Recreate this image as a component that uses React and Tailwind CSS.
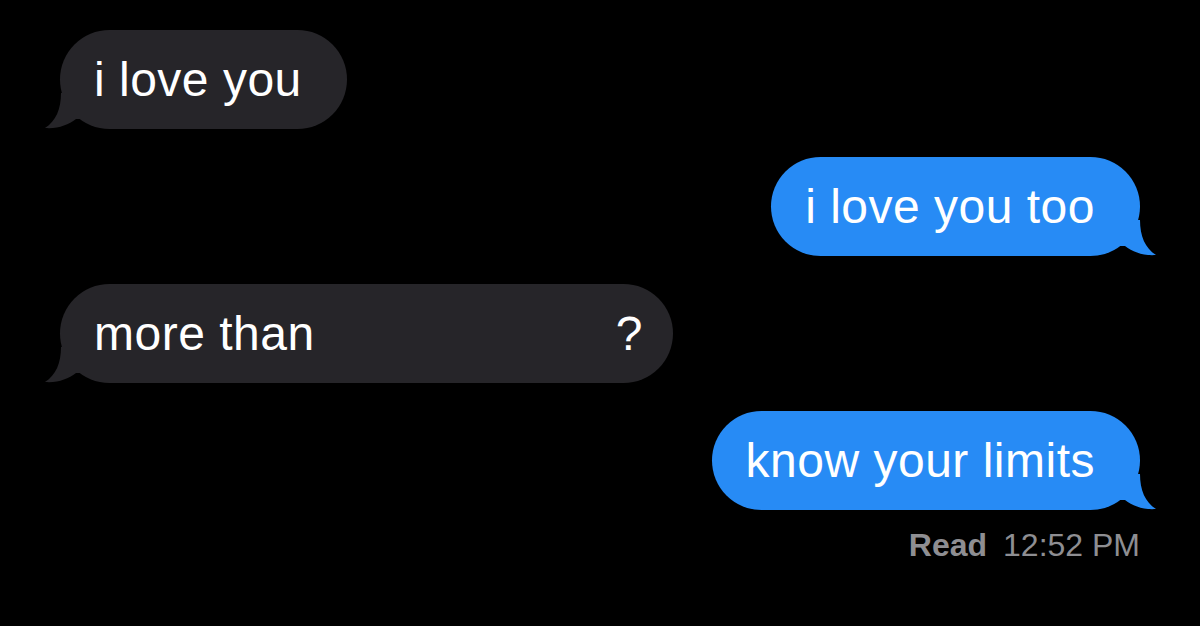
function Tail({ side, color }) {
  // the little curled tail at the bottom corner of a bubble
  if (side === 'left') {
    return (
      <svg
        className="absolute left-[-16px] bottom-0"
        width="40"
        height="36"
        viewBox="0 0 40 36"
      >
        <path d="M17 0 C17 16 12 28 1 35 C14 36 24 32 32 26 L40 26 L40 0 Z" fill={color} />
      </svg>
    );
  }
  return (
    <svg
      className="absolute right-[-17px] bottom-0"
      width="40"
      height="36"
      viewBox="0 0 40 36"
    >
      <path d="M23 0 C23 16 28 28 39 35 C26 36 16 32 8 26 L0 26 L0 0 Z" fill={color} />
    </svg>
  );
}

function Bubble({ from, children, className = '' }) {
  const mine = from === 'me';
  const color = mine ? '#278bf5' : '#262529';
  return (
    <div
      className={`relative flex items-center h-[99px] rounded-[50px] pl-[34px] text-white text-[48px] leading-[58px] tracking-[0.5px] ${
        mine ? 'self-end bg-[#278bf5]' : 'self-start bg-[#262529]'
      } ${className || 'pr-[45px]'}`}
    >
      <Tail side={mine ? 'right' : 'left'} color={color} />
      {children}
    </div>
  );
}

export default function App() {
  return (
    <div
      className="w-full h-[626px] bg-black flex flex-col gap-[28px] px-[60px] pt-[30px] overflow-hidden"
      style={{ fontFamily: '"Liberation Sans", Arial, sans-serif' }}
    >
      <Bubble from="them">i love you</Bubble>
      <Bubble from="me">i love you too</Bubble>
      <Bubble from="them" className="w-[613px] justify-between pr-[30px]">
        <span>more than</span>
        <span>?</span>
      </Bubble>
      <div className="self-end flex flex-col items-end">
        <Bubble from="me">know your limits</Bubble>
        <div className="mt-[16px] text-[32px] leading-[38px] text-[#8e8e92]">
          <span className="font-bold">Read</span>
          <span className="ml-[16px]">12:52 PM</span>
        </div>
      </div>
    </div>
  );
}
